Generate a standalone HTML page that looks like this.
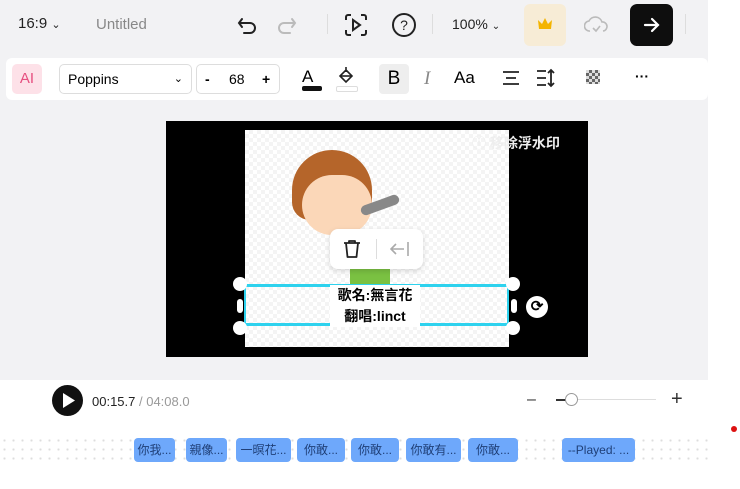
<!DOCTYPE html><html><head><meta charset="utf-8"><style>
body{margin:0;width:740px;height:489px;overflow:hidden;background:#fff;font-family:"Liberation Sans","Noto Sans CJK TC",sans-serif;position:relative}
.a{position:absolute}
.chip{position:absolute;top:438px;height:24px;background:#6ea8fb;border-radius:4px;color:#1f3f77;font-size:12px;line-height:24px;text-align:center;white-space:nowrap;overflow:hidden}
</style></head><body>
<div class="a" style="left:0;top:0;width:708px;height:380px;background:#f2f2f4"></div>
<div class="a" style="left:18px;top:15px;font-size:15px;color:#222">16:9 <span style="font-size:11px">⌄</span></div>
<div class="a" style="left:96px;top:16px;font-size:15px;color:#888">Untitled</div>
<svg class="a" style="left:236px;top:13px" width="80" height="24" fill="none" stroke-width="2" stroke-linecap="round"><path d="M6 6l-3 4 3 4M3 10h11a5 5 0 010 10H8" stroke="#222"/><path d="M74 6l3 4-3 4M77 10H66a5 5 0 000 10h6" stroke="#bbb" transform="translate(-18 0)"/></svg>
<div class="a" style="left:327px;top:14px;width:1px;height:20px;background:#ddd"></div>
<svg class="a" style="left:343px;top:12px" width="26" height="26" fill="none" stroke="#222" stroke-width="2"><path d="M3 8V5a2 2 0 012-2h3M18 3h3a2 2 0 012 2v3M23 18v3a2 2 0 01-2 2h-3M8 23H5a2 2 0 01-2-2v-3"/><path d="M10 8l7 5-7 5z"/></svg>
<svg class="a" style="left:391px;top:12px" width="26" height="26" fill="none" stroke="#222" stroke-width="2"><circle cx="13" cy="13" r="11"/><text x="13" y="18" text-anchor="middle" font-size="14" fill="#222" stroke="none" font-family="Liberation Sans">?</text></svg>
<div class="a" style="left:432px;top:14px;width:1px;height:20px;background:#ddd"></div>
<div class="a" style="left:452px;top:16px;font-size:14px;color:#222">100% <span style="font-size:10px">⌄</span></div>
<div class="a" style="left:524px;top:4px;width:42px;height:42px;background:#f7ecd6;border-radius:6px"></div>
<svg class="a" style="left:537px;top:17px" width="16" height="14"><path d="M1 3l4 4 3-6 3 6 4-4-1 9H2z" fill="#f4b400"/></svg>
<svg class="a" style="left:584px;top:14px" width="24" height="22" fill="none" stroke="#bbb" stroke-width="1.6"><path d="M6 17a5 5 0 01-1-10 7 7 0 0113 1 4.5 4.5 0 011 9"/><path d="M9 14l3 3 4-5"/></svg>
<div class="a" style="left:630px;top:4px;width:43px;height:42px;background:#0e0e0e;border-radius:7px"></div>
<svg class="a" style="left:643px;top:17px" width="18" height="16" fill="none" stroke="#fff" stroke-width="2.2" stroke-linecap="round"><path d="M2 8h13M9 2l6 6-6 6"/></svg>
<div class="a" style="left:685px;top:14px;width:1px;height:20px;background:#ddd"></div>
<div class="a" style="left:6px;top:58px;width:702px;height:42px;background:#fff;border-radius:6px"></div>
<div class="a" style="left:12px;top:64px;width:30px;height:30px;background:#fde1e8;border-radius:5px;color:#e64e7f;font-size:15px;text-align:center;line-height:30px">AI</div>
<div class="a" style="left:59px;top:64px;width:131px;height:28px;border:1px solid #ddd;border-radius:5px;font-size:14px;line-height:28px"><span style="margin-left:8px">Poppins</span><span style="position:absolute;right:8px;font-size:11px">⌄</span></div>
<div class="a" style="left:196px;top:64px;width:82px;height:28px;border:1px solid #ddd;border-radius:5px;font-size:14px;line-height:28px"><span style="position:absolute;left:8px;font-weight:bold">-</span><span style="position:absolute;left:32px">68</span><span style="position:absolute;left:65px;font-weight:bold">+</span></div>
<div class="a" style="left:302px;top:67px;font-size:17px">A</div><div class="a" style="left:302px;top:86px;width:20px;height:5px;background:#111;border-radius:2px"></div>
<svg class="a" style="left:338px;top:66px" width="16" height="18" fill="none" stroke="#222" stroke-width="1.6"><path d="M8 1v5M8 4l6 6-6 6-6-6z"/><path d="M2 10h12"/></svg>
<div class="a" style="left:336px;top:86px;width:20px;height:4px;border:1px solid #ddd;border-radius:2px"></div>
<div class="a" style="left:379px;top:64px;width:30px;height:30px;background:#eee;border-radius:4px;font-size:19px;text-align:center;line-height:30px">B</div>
<div class="a" style="left:424px;top:68px;font-size:19px;font-style:italic;color:#888;font-family:'Liberation Serif'">I</div>
<div class="a" style="left:454px;top:68px;font-size:17px">Aa</div>
<svg class="a" style="left:502px;top:71px" width="18" height="14" stroke="#222" stroke-width="1.8"><path d="M1 1h16M4 7h10M1 13h16"/></svg>
<svg class="a" style="left:536px;top:68px" width="20" height="20" stroke="#222" stroke-width="1.8" fill="none"><path d="M1 3h9M1 10h9M1 17h9M15 2v16M12 5l3-3 3 3M12 15l3 3 3-3"/></svg>
<div class="a" style="left:586px;top:70px;width:14px;height:14px;background:repeating-conic-gradient(#666 0 25%,#ddd 0 50%) 0 0/6px 6px"></div>
<div class="a" style="left:635px;top:68px;font-size:14px;font-weight:bold">···</div>
<div class="a" style="left:166px;top:121px;width:422px;height:236px;background:#000"></div>
<div class="a" style="left:245px;top:130px;width:264px;height:217px;background:repeating-conic-gradient(#f4f4f4 0 25%,#fff 0 50%) 0 0/8px 8px"></div>
<div class="a" style="left:292px;top:150px;width:80px;height:70px;background:#b5652a;border-radius:45px 45px 20px 20px"></div>
<div class="a" style="left:302px;top:175px;width:70px;height:60px;background:#fbd7b8;border-radius:30px"></div>
<div class="a" style="left:360px;top:200px;width:40px;height:10px;background:#888;border-radius:5px;transform:rotate(-20deg)"></div>
<div class="a" style="left:350px;top:232px;width:40px;height:60px;background:#7ac142"></div>
<div class="a" style="left:472px;top:133px;color:#eee;font-size:14px;font-weight:bold">ⓘ 移除浮水印</div>
<div class="a" style="left:330px;top:229px;width:93px;height:40px;background:#fff;border-radius:8px;box-shadow:0 2px 6px rgba(0,0,0,.15)"><span style="position:absolute;left:46px;top:10px;width:1px;height:20px;background:#ddd"></span></div>
<svg class="a" style="left:342px;top:239px" width="20" height="20" fill="none" stroke="#222" stroke-width="1.8" stroke-linejoin="round"><path d="M2 4h16M7 4V2h6v2M4 4l1.5 14h9L16 4"/></svg>
<svg class="a" style="left:390px;top:241px" width="20" height="16" fill="none" stroke="#aaa" stroke-width="1.6"><path d="M1 8h13M6 3L1 8l5 5M18 1v14"/></svg>
<div class="a" style="left:244px;top:284px;width:265px;height:42px;border-top:3px solid #2ed2ee;border-bottom:3px solid #2ed2ee;box-sizing:border-box"></div>
<div class="a" style="left:244px;top:284px;width:2px;height:44px;background:#2ed2ee"></div><div class="a" style="left:507px;top:284px;width:2px;height:44px;background:#2ed2ee"></div>
<div class="a" style="left:330px;top:285px;width:90px;text-align:center;font-size:14px;font-weight:bold;line-height:21px;background:#fff">歌名:無言花<br>翻唱:linct</div>
<div class="a" style="left:233px;top:277px;width:14px;height:14px;background:#fff;border-radius:50%"></div>
<div class="a" style="left:506px;top:277px;width:14px;height:14px;background:#fff;border-radius:50%"></div>
<div class="a" style="left:233px;top:321px;width:14px;height:14px;background:#fff;border-radius:50%"></div>
<div class="a" style="left:506px;top:321px;width:14px;height:14px;background:#fff;border-radius:50%"></div>
<div class="a" style="left:237px;top:299px;width:6px;height:14px;background:#fff;border-radius:3px"></div>
<div class="a" style="left:511px;top:299px;width:6px;height:14px;background:#fff;border-radius:3px"></div>
<div class="a" style="left:526px;top:296px;width:22px;height:22px;background:#fff;border-radius:50%;text-align:center;line-height:22px;font-size:15px;font-weight:bold">⟳</div>
<div class="a" style="left:52px;top:385px;width:31px;height:31px;background:#111;border-radius:50%"></div>
<svg class="a" style="left:62px;top:392px" width="14" height="17"><path d="M1 1L13 8.5 1 16z" fill="#fff"/></svg>
<div class="a" style="left:92px;top:394px;font-size:13px;color:#222">00:15.7 <span style="color:#999">/ 04:08.0</span></div>
<div class="a" style="left:527px;top:391px;font-size:16px;color:#333">–</div>
<div class="a" style="left:556px;top:399px;width:100px;height:1px;background:#ddd"></div>
<div class="a" style="left:556px;top:399px;width:10px;height:2px;background:#333"></div>
<div class="a" style="left:565px;top:393px;width:11px;height:11px;border:1px solid #999;border-radius:50%;background:#fff"></div>
<div class="a" style="left:671px;top:388px;font-size:20px;color:#333">+</div>
<div class="a" style="left:0;top:436px;width:708px;height:28px;background:radial-gradient(#ddd 1px,transparent 1.2px) 0 0/9px 9px"></div>
<div class="chip" style="left:134px;width:41px">你我...</div>
<div class="chip" style="left:186px;width:41px">親像...</div>
<div class="chip" style="left:236px;width:55px">一暝花...</div>
<div class="chip" style="left:297px;width:48px">你敢...</div>
<div class="chip" style="left:351px;width:48px">你敢...</div>
<div class="chip" style="left:406px;width:55px">你敢有...</div>
<div class="chip" style="left:468px;width:50px">你敢...</div>
<div class="chip" style="left:562px;width:73px">--Played: ...</div>
<div class="a" style="left:731px;top:426px;width:6px;height:6px;background:#d11;border-radius:50%"></div>
</body></html>
